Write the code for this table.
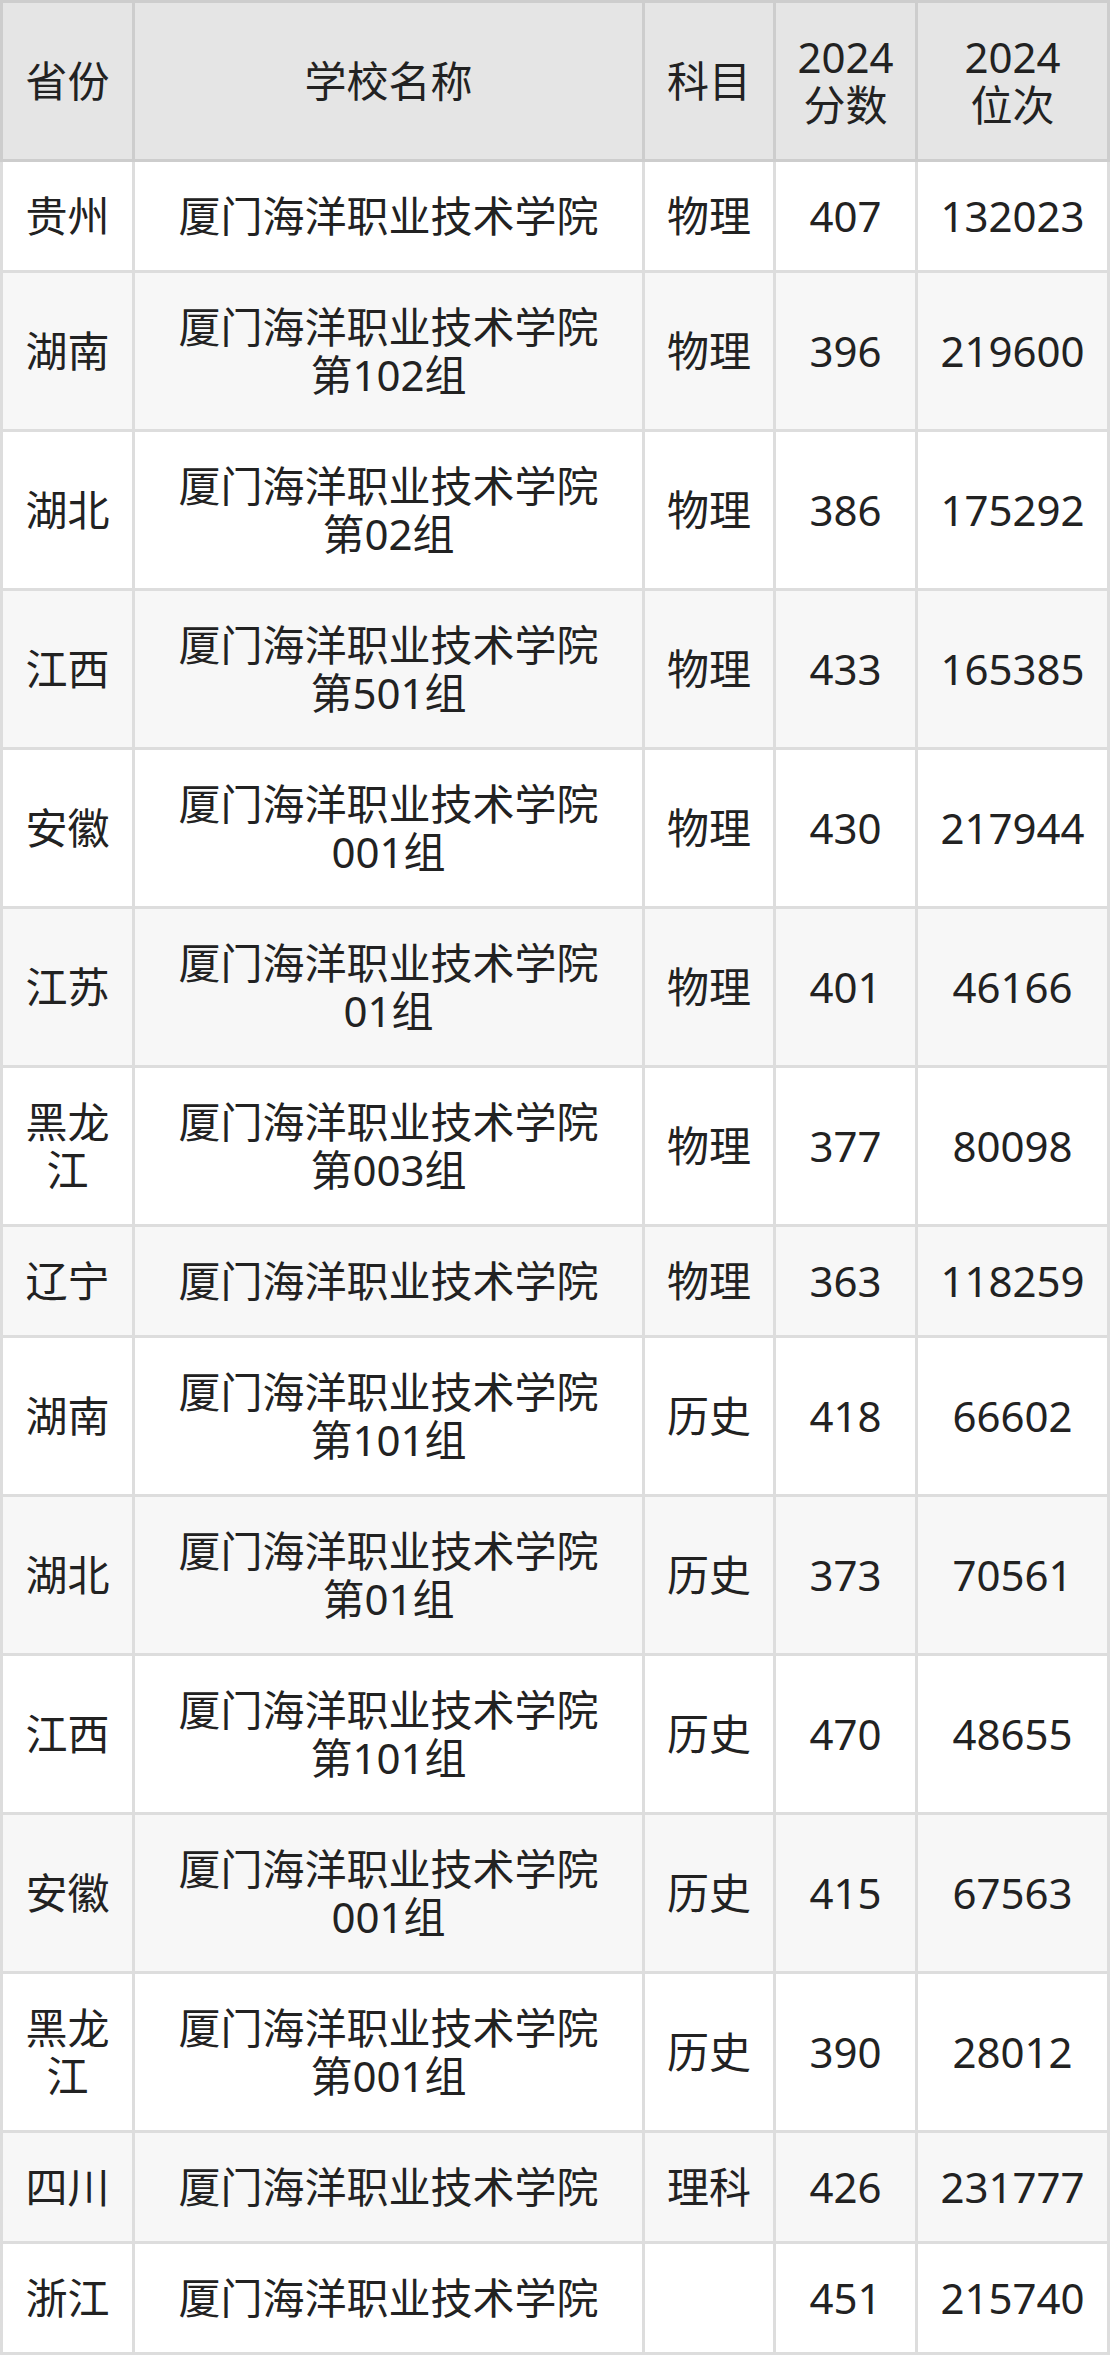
const SCHOOL = '厦门海洋职业技术学院';

const ROWS = [
  { province: '贵州', group: '', subject: '物理', score: '407', rank: '132023' },
  { province: '湖南', group: '第102组', subject: '物理', score: '396', rank: '219600' },
  { province: '湖北', group: '第02组', subject: '物理', score: '386', rank: '175292' },
  { province: '江西', group: '第501组', subject: '物理', score: '433', rank: '165385' },
  { province: '安徽', group: '001组', subject: '物理', score: '430', rank: '217944' },
  { province: '江苏', group: '01组', subject: '物理', score: '401', rank: '46166' },
  { province: '黑龙江', group: '第003组', subject: '物理', score: '377', rank: '80098' },
  { province: '辽宁', group: '', subject: '物理', score: '363', rank: '118259' },
  { province: '湖南', group: '第101组', subject: '历史', score: '418', rank: '66602' },
  { province: '湖北', group: '第01组', subject: '历史', score: '373', rank: '70561' },
  { province: '江西', group: '第101组', subject: '历史', score: '470', rank: '48655' },
  { province: '安徽', group: '001组', subject: '历史', score: '415', rank: '67563' },
  { province: '黑龙江', group: '第001组', subject: '历史', score: '390', rank: '28012' },
  { province: '四川', group: '', subject: '理科', score: '426', rank: '231777' },
  { province: '浙江', group: '', subject: '', score: '451', rank: '215740' },
];

const COLS = 'grid grid-cols-[129px_507px_128px_139px_189px] gap-[3px]';
const CELL = 'flex flex-col items-center justify-center text-center px-[10px] py-[30px]';

export default function App() {
  return (
    <div
      className="w-[1110px] text-[42px] leading-[48px] text-[#222222]"
      style={{ fontFamily: '"Noto Sans", "Noto Sans CJK SC", sans-serif' }}
    >
      {/* Header */}
      <div className={`${COLS} bg-[#cdcdcd] p-[3px]`}>
        <div className={`${CELL} bg-[#e5e5e5]`}>省份</div>
        <div className={`${CELL} bg-[#e5e5e5]`}>学校名称</div>
        <div className={`${CELL} bg-[#e5e5e5]`}>科目</div>
        <div className={`${CELL} bg-[#e5e5e5]`}>
          <span>2024</span>
          <span>分数</span>
        </div>
        <div className={`${CELL} bg-[#e5e5e5]`}>
          <span>2024</span>
          <span>位次</span>
        </div>
      </div>

      {/* Body */}
      <div className={`${COLS} bg-[#dddddd] px-[3px] pb-[3px]`}>
        {ROWS.map((r, i) => {
          const bg = i % 2 === 1 ? 'bg-[#f7f7f7]' : 'bg-white';
          return [
            <div key={`p${i}`} className={`${CELL} ${bg}`}>{r.province}</div>,
            <div key={`s${i}`} className={`${CELL} ${bg}`}>
              <span>{SCHOOL}</span>
              {r.group && <span>{r.group}</span>}
            </div>,
            <div key={`k${i}`} className={`${CELL} ${bg}`}>{r.subject}</div>,
            <div key={`f${i}`} className={`${CELL} ${bg}`}>{r.score}</div>,
            <div key={`r${i}`} className={`${CELL} ${bg}`}>{r.rank}</div>,
          ];
        })}
      </div>
    </div>
  );
}
